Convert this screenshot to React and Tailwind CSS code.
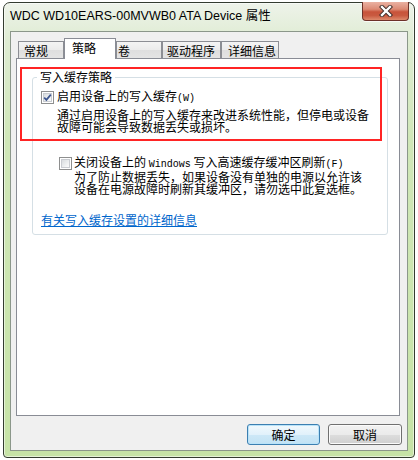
import React from 'react';

const tabs = [
  { label: '常规', w: 'w-[46px]', pl: 'pl-[5px]' },
  { label: '策略', w: 'w-[52px]', pl: 'pl-[7px]', active: true },
  { label: '卷', w: 'w-[46px]', pl: 'pl-[1px]' },
  { label: '驱动程序', w: 'w-[59px]', pl: 'pl-[4px]' },
  { label: '详细信息', w: 'w-[58px]', pl: 'pl-[6px]' },
];

function CheckBox({ checked }) {
  return (
    <span className="relative flex w-[13px] h-[13px] shrink-0 border border-[#8e8f8f] bg-white p-px">
      <span className="flex-1 border border-[#c9ccd1] bg-[linear-gradient(135deg,#d9dcdf_0%,#eef0f1_60%,#fbfbfb_100%)]" />
      {checked && (
        <svg className="absolute inset-0" width="11" height="11" viewBox="0 0 11 11">
          <path d="M2.2 5.6 L4.4 7.9 L8.8 2.6" fill="none" stroke="#3d5690" strokeWidth="1.7" />
        </svg>
      )}
    </span>
  );
}

function Mono({ children }) {
  return <span className="font-['Liberation_Mono',monospace] text-[10px]">{children}</span>;
}

export default function App() {
  return (
    <div className="w-[418px] h-[460px] bg-white pt-[2px] pl-[3px] font-['Noto_Sans_CJK_SC',sans-serif] text-black">
      {/* window frame */}
      <div className="w-[412px] h-[456px] flex flex-col rounded-t-[7px] rounded-b-[4px] border border-[#343c30] bg-[linear-gradient(180deg,#eef3ea_0%,#dfecd3_8%,#d0e7b8_30%,#c6e3a6_100%)] shadow-[inset_0_0_0_1px_rgba(255,255,255,0.55)]">
        {/* title bar */}
        <div className="flex h-[28px] shrink-0">
          <div className="flex-1 pl-[6px] pt-[6px] font-['Liberation_Sans','Noto_Sans_CJK_SC',sans-serif] text-[12.5px] leading-[14px] text-black">
            WDC WD10EARS-00MVWB0 ATA Device 属性
          </div>
          <div className="-mt-px mr-[5px] w-[47px] h-[19px] flex items-center justify-center rounded-b-[4px] border border-t-0 border-[#6d3128] bg-[linear-gradient(180deg,#eab1a2_0%,#dc8a74_40%,#c8533a_55%,#c95a40_75%,#dd8a6c_100%)] shadow-[0_1px_0_rgba(255,255,255,0.7)]">
            <svg width="16" height="12" viewBox="0 0 16 12">
              <path d="M4 2 L12 10 M12 2 L4 10" stroke="#3b2a26" strokeWidth="4.2" strokeLinecap="square" />
              <path d="M4 2 L12 10 M12 2 L4 10" stroke="#ffffff" strokeWidth="2.4" strokeLinecap="square" />
            </svg>
          </div>
        </div>

        {/* client area */}
        <div className="mx-[6px] h-[420px] border border-[#8b978a] bg-[#f0f0f0] pt-[6px] pl-[5px] pr-[7px] flex flex-col">
          {/* tabs */}
          <div className="flex items-end h-[20px] pl-[2px]">
            {tabs.map((t) =>
              t.active ? (
                <div
                  key={t.label}
                  className={`relative z-10 -mb-px h-[21px] ${t.w} ${t.pl} pt-[2px] border border-b-0 border-[#898c95] bg-white text-[12px] leading-[14px]`}
                >
                  {t.label}
                </div>
              ) : (
                <div
                  key={t.label}
                  className={`h-[17px] ${t.w} ${t.pl} pt-[2px] border border-b-0 border-[#8c8e94] bg-[linear-gradient(180deg,#f4f4f4_0%,#ebebeb_50%,#dedede_51%,#e4e4e4_100%)] text-[12px] leading-[14px]`}
                >
                  {t.label}
                </div>
              )
            )}
          </div>

          {/* tab panel */}
          <div className="relative h-[358px] border border-[#898c95] bg-white">
            <div className="relative mt-[18px] ml-[15px] w-[356px] rounded-[3px] border border-[#d5dfe5] pt-[13px] pl-[8px] pb-[8px] text-[12px] leading-[12px]">
              <span className="absolute left-[4px] -top-[7px] bg-white px-[3px] leading-[12px]">写入缓存策略</span>

              <div className="flex items-center h-[13px] gap-[3px]">
                <CheckBox checked />
                <span>
                  启用设备上的写入缓存<Mono>(W)</Mono>
                </span>
              </div>
              <div className="mt-[5px] ml-[16px]">
                <div>通过启用设备上的写入缓存来改进系统性能，但停电或设备</div>
                <div>故障可能会导致数据丢失或损坏。</div>
              </div>

              <div className="mt-[24px] ml-[18px] flex items-center h-[13px] gap-[2px]">
                <CheckBox />
                <span>
                  关闭设备上的 <Mono>Windows</Mono> 写入高速缓存缓冲区刷新<Mono>(F)</Mono>
                </span>
              </div>
              <div className="mt-px ml-[33px]">
                <div>为了防止数据丢失，如果设备没有单独的电源以允许该</div>
                <div>设备在电源故障时刷新其缓冲区，请勿选中此复选框。</div>
              </div>

              <div className="mt-[19px]">
                <span className="text-[#0066cc] underline">有关写入缓存设置的详细信息</span>
              </div>
            </div>

            {/* red annotation box */}
            <div className="pointer-events-none absolute left-[3px] top-[8px] w-[362px] h-[74px] border-2 border-[#ff2424]" />
          </div>

          {/* buttons */}
          <div className="mt-[8px] -mr-[2px] flex justify-end gap-[8px]">
            <button className="w-[73px] h-[21px] rounded-[3px] border border-[#3c7fb1] bg-[linear-gradient(180deg,#f1f9fd_0%,#e1f1fb_50%,#cde8f7_51%,#c2e2f4_100%)] shadow-[inset_0_0_0_1px_#b9e3f9] text-[12px] leading-[14px]">
              确定
            </button>
            <button className="w-[74px] h-[21px] rounded-[3px] border border-[#707070] bg-[linear-gradient(180deg,#f2f2f2_0%,#ebebeb_50%,#dddddd_51%,#cfcfcf_100%)] shadow-[inset_0_0_0_1px_#fbfbfb] text-[12px] leading-[14px]">
              取消
            </button>
          </div>
        </div>
      </div>
    </div>
  );
}
